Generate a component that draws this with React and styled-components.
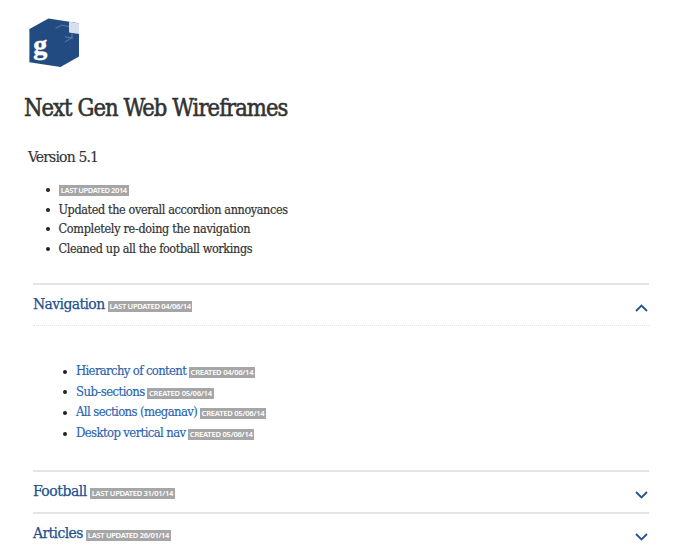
import React from 'react';
import styled, { createGlobalStyle } from 'styled-components';

const GlobalStyle = createGlobalStyle`
  body { margin: 0; background: #fff; }
  * { box-sizing: border-box; }
`;

const Page = styled.main`
  width: 700px;
  height: 552px;
  overflow: hidden;
  display: flex;
  flex-direction: column;
  padding: 17px 51px 0 24px;
  color: #333;
  font-family: 'DejaVu Serif Condensed', 'DejaVu Serif', serif;
  font-stretch: condensed;
  white-space: nowrap;
`;

const Logo = styled.svg`
  display: block;
  flex: none;
  width: 52px;
  height: 51px;
  margin-left: 4px;
`;

const LogoLetter = styled.text`
  font: bold 28px 'Liberation Serif', serif;
  fill: #fff;
  stroke: #fff;
  stroke-width: 0.5px;
`;

const Title = styled.h1`
  margin: 25px 0 0;
  font-size: 23.5px;
  font-weight: 400;
  line-height: 30px;
  letter-spacing: -0.94px;
  -webkit-text-stroke: 0.55px #333;
`;

const Version = styled.h2`
  margin: 24px 0 0 4px;
  font-size: 15.5px;
  font-weight: 400;
  line-height: 20px;
  letter-spacing: -0.82px;
  -webkit-text-stroke: 0.15px #333;
`;

const Changes = styled.ul`
  flex: none;
  margin: 13px 0 0 22px;
  padding: 0;
  list-style: none;
  height: 103px;
`;

const Item = styled.li`
  display: flex;
  align-items: center;
  height: ${(p) => p.$height}px;
  &::before {
    content: '';
    flex: none;
    width: 4px;
    height: 4px;
    margin: 1px ${(p) => p.$gap}px 0 0;
    border-radius: 50%;
    background: #222;
  }
`;

const Change = styled.span`
  font-size: 12.5px;
  line-height: 19px;
  letter-spacing: ${(p) => p.$tracking}px;
  -webkit-text-stroke: 0.2px #333;
`;

const Tag = styled.span`
  flex: none;
  display: flex;
  align-items: center;
  justify-content: center;
  width: ${(p) => p.$width}px;
  height: 11px;
  margin: ${(p) => p.$drop || 0}px 0 0 ${(p) => p.$gap || 0}px;
  background: #a6a6a6;
  color: #fff;
  font: 600 7.6px/11px 'Noto Sans', sans-serif;
  letter-spacing: ${(p) => p.$tracking}px;
`;

const Accordion = styled.div`
  flex: none;
  margin-left: 9px;
  width: 616px;
`;

const Section = styled.section`
  border-top: 2px solid #e4e4e4;
`;

const SectionHeader = styled.header`
  display: flex;
  align-items: center;
  height: 40px;
  padding-bottom: 2px;
`;

const SectionTitle = styled.h3`
  margin: 0;
  color: #22508f;
  font-size: 15.5px;
  font-weight: 400;
  line-height: 20px;
  letter-spacing: ${(p) => p.$tracking}px;
  -webkit-text-stroke: 0.25px #22508f;
`;

const Chevron = styled.svg`
  width: 13px;
  height: 8px;
  margin: 8px 1px 0 auto;
  fill: none;
  stroke: #2a5490;
  stroke-width: 1.9;
`;

const Links = styled.ul`
  margin: 0;
  padding: 35px 0 0 30px;
  height: 145px;
  list-style: none;
  border-top: 1px dotted #e2e2e2;
`;

const Link = styled.a`
  color: #2a64b0;
  font-size: 13px;
  line-height: 20px;
  text-decoration: none;
  letter-spacing: ${(p) => p.$tracking}px;
  -webkit-text-stroke: 0.15px #2a64b0;
`;

const changes = [
  ['Updated the overall accordion annoyances', -0.37],
  ['Completely re-doing the navigation', -0.29],
  ['Cleaned up all the football workings', -0.37],
];

const links = [
  ['Hierarchy of content', -0.66, '04/06/14'],
  ['Sub-sections', -0.56, '05/06/14'],
  ['All sections (meganav)', -0.6, '05/06/14'],
  ['Desktop vertical nav', -0.62, '05/06/14'],
];

const sections = [
  ['Navigation', -0.6, '04/06/14', true],
  ['Football', -0.45, '31/01/14', false],
  ['Articles', -0.58, '26/01/14', false],
];

export default function App() {
  return (
    <>
      <GlobalStyle />
      <Page>
        <Logo viewBox="0 0 52 51">
          <path d="M1.4 12 20.5 1.6 51 6.2V39.5L32.5 50 1.4 45.3Z" fill="#224b82" />
          <path d="M41 4.7 51 6.2V17L41 15.5Z" fill="#d7dfec" />
          <path d="M27.5 11.5 33.5 8.2 41 9.5M44 16v4.5L37 25M37 19.8l8 1.4" fill="none" stroke="#7790b5" strokeWidth=".7" />
          <LogoLetter x="5.2" y="36.5">g</LogoLetter>
        </Logo>
        <Title>Next Gen Web Wireframes</Title>
        <Version>Version 5.1</Version>
        <Changes>
          <Item $height={19.3} $gap={9}>
            <Tag $width={69.5} $drop={1} $tracking={-0.45}>LAST UPDATED 2014</Tag>
          </Item>
          {changes.map(([text, tracking]) => (
            <Item key={text} $height={19.6} $gap={8.5}>
              <Change $tracking={tracking}>{text}</Change>
            </Item>
          ))}
        </Changes>
        <Accordion>
          {sections.map(([name, tracking, date, open]) => (
            <Section key={name}>
              <SectionHeader>
                <SectionTitle $tracking={tracking}>{name}</SectionTitle>
                <Tag $width={84.5} $gap={3.4} $drop={4} $tracking={-0.33}>LAST UPDATED {date}</Tag>
                <Chevron viewBox="0 0 13 8">
                  <path d={open ? 'M1 7 6.5 1.6 12 7' : 'M1 1 6.5 6.4 12 1'} />
                </Chevron>
              </SectionHeader>
              {open && (
                <Links>
                  {links.map(([label, linkTracking, created]) => (
                    <Item key={label} $height={20.6} $gap={9}>
                      <Link $tracking={linkTracking}>{label}</Link>
                      <Tag $width={66.5} $gap={2.4} $drop={3} $tracking={-0.25}>CREATED {created}</Tag>
                    </Item>
                  ))}
                </Links>
              )}
            </Section>
          ))}
        </Accordion>
      </Page>
    </>
  );
}
